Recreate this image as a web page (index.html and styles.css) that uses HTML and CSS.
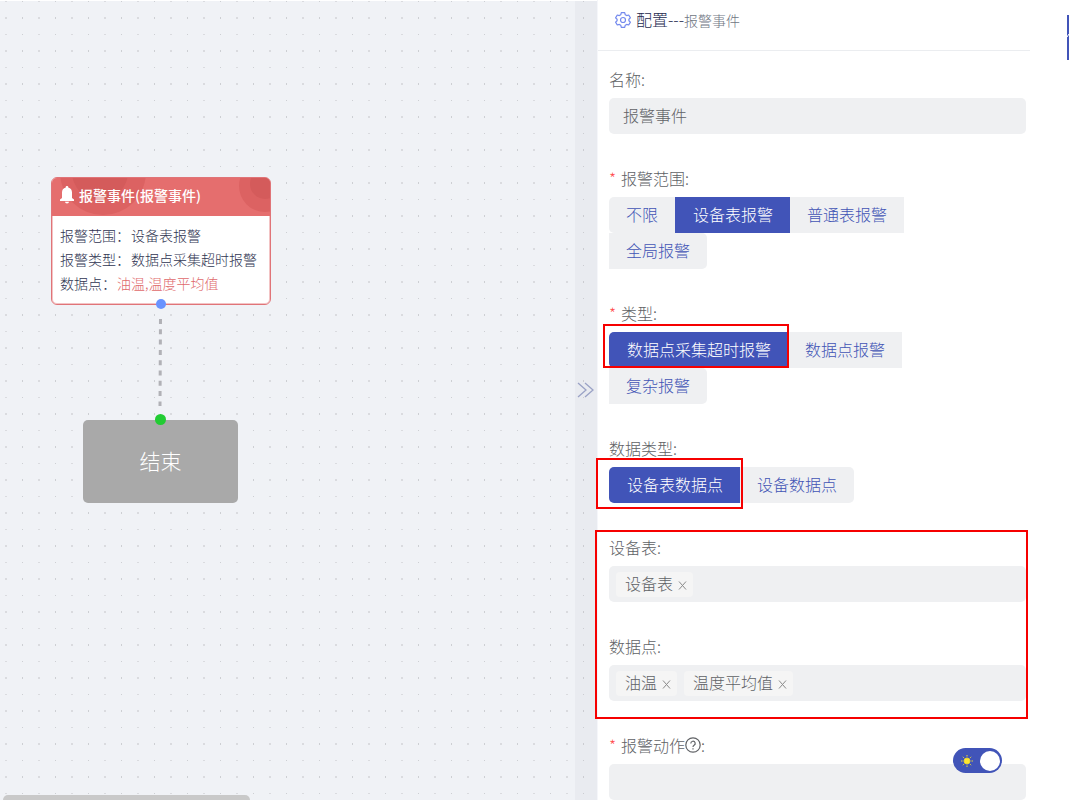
FILE: index.html
```html
<!DOCTYPE html>
<html lang="zh-CN">
<head>
<meta charset="utf-8">
<title>配置 - 报警事件</title>
<meta name="viewport" content="width=device-width, initial-scale=1">
<link rel="stylesheet" href="styles.css">
</head>
<body>
<div class="app">
  <main class="canvas">
    <svg class="grid" aria-hidden="true">
      <defs>
        <pattern id="dots" width="33" height="33" patternUnits="userSpaceOnUse">
          <path d="M5 1h2v1H5zM5 17h2v2H5z" fill="#dadbdf"/>
          <path d="M22 1h1v1h-1zM22 17h1v2h-1z" fill="#cdcfd3"/>
        </pattern>
      </defs>
      <rect width="100%" height="100%" fill="url(#dots)"/>
    </svg>

    <svg class="link" viewBox="0 0 4 90" aria-hidden="true"><path d="M2.500 0L2 88"/></svg>

    <article class="node">
      <header class="node-head">
        <svg class="node-art" viewBox="0 0 218 38" preserveAspectRatio="none" aria-hidden="true">
          <circle cx="51" cy="-6" r="43" fill="#dc6262"/>
          <circle cx="48" cy="-6" r="28" fill="#d45b5b"/>
          <circle cx="213" cy="8" r="26" fill="#dc6262"/>
          <circle cx="213" cy="6" r="15" fill="#d45b5b"/>
        </svg>
        <svg class="bell" viewBox="0 0 14 18" aria-hidden="true">
          <path d="M7 0a1.200 1.200 0 0 1 1.200 1.500C10.800 2.100 12 4 12 6.500V12l2 1.500V15H0v-1.500L2 12V6.500C2 4 3.200 2.100 5.800 1.500A1.200 1.200 0 0 1 7 0zM5 15.800h4a2 1.800 0 0 1-4 0z"/>
        </svg>
        <h2 class="node-title">报警事件(报警事件)</h2>
      </header>
      <dl class="node-body">
        <div class="row"><dt>报警范围：</dt><dd>设备表报警</dd></div>
        <div class="row"><dt>报警类型：</dt><dd>数据点采集超时报警</dd></div>
        <div class="row"><dt>数据点：</dt><dd class="points">油温,温度平均值</dd></div>
      </dl>
      <span class="port port-out"></span>
    </article>

    <div class="end-node">结束<span class="port port-in"></span></div>

    <button class="collapse" type="button" aria-label="收起">
      <svg viewBox="0 0 18 18" aria-hidden="true"><path d="M1 2l8 7-8 7M8 2l8 7-8 7"/></svg>
    </button>
    <div class="scrollbar"></div>
  </main>

  <aside class="panel">
    <header class="panel-head">
      <svg class="gear" viewBox="0 0 16 16" aria-hidden="true">
        <path d="M6.300 .7h3.400l.5 2 1.500.9 2-.6 1.700 2.900L13.900 7.300v1.400l1.500 1.400-1.700 2.900-2-.6-1.500.9-.5 2H6.300l-.5-2-1.500-.9-2 .6L.6 10.100l1.500-1.400V7.300L.6 5.900 2.300 3l2 .6 1.500-.9z"/>
        <circle cx="8" cy="8" r="2.500"/>
      </svg>
      <h1 class="panel-title">配置<span class="dash">---</span><small>报警事件</small></h1>
    </header>

    <form class="form">
      <div class="field">
        <label class="label" for="name">名称:</label>
        <input class="input" id="name" type="text" value="报警事件">
      </div>

      <div class="field" role="radiogroup" aria-labelledby="scope-label">
        <div class="label required" id="scope-label">报警范围:</div>
        <div class="segments">
          <label class="segment"><input type="radio" name="scope">不限</label>
          <label class="segment"><input type="radio" name="scope" checked>设备表报警</label>
          <label class="segment"><input type="radio" name="scope">普通表报警</label>
          <label class="segment"><input type="radio" name="scope">全局报警</label>
        </div>
      </div>

      <div class="field" role="radiogroup" aria-labelledby="type-label">
        <div class="label required" id="type-label">类型:</div>
        <div class="segments">
          <label class="segment"><input type="radio" name="type" checked>数据点采集超时报警</label>
          <label class="segment"><input type="radio" name="type">数据点报警</label>
          <label class="segment"><input type="radio" name="type">复杂报警</label>
          <span class="mark mark-type"></span>
        </div>
      </div>

      <div class="field" role="radiogroup" aria-labelledby="data-label">
        <div class="label" id="data-label">数据类型:</div>
        <div class="segments">
          <label class="segment"><input type="radio" name="data" checked>设备表数据点</label>
          <label class="segment"><input type="radio" name="data">设备数据点</label>
          <span class="mark mark-data"></span>
        </div>
      </div>

      <div class="group">
        <div class="field">
          <div class="label" id="table-label">设备表:</div>
          <div class="tags" role="group" aria-labelledby="table-label">
            <span class="tag">设备表<button class="remove" type="button" aria-label="移除设备表"><svg viewBox="0 0 9 9"><path d="M1 .5l7 8M8 .5l-7 8"/></svg></button></span>
          </div>
        </div>
        <div class="field">
          <div class="label" id="point-label">数据点:</div>
          <div class="tags" role="group" aria-labelledby="point-label">
            <span class="tag">油温<button class="remove" type="button" aria-label="移除油温"><svg viewBox="0 0 9 9"><path d="M1 .5l7 8M8 .5l-7 8"/></svg></button></span>
            <span class="tag">温度平均值<button class="remove" type="button" aria-label="移除温度平均值"><svg viewBox="0 0 9 9"><path d="M1 .5l7 8M8 .5l-7 8"/></svg></button></span>
          </div>
        </div>
        <span class="mark mark-group"></span>
      </div>

      <div class="field">
        <label class="label required" for="action">报警动作<svg class="help" viewBox="0 0 16 16" aria-hidden="true"><circle cx="8" cy="8" r="7.200"/><path d="M5.800 6.400a2.200 2.200 0 1 1 3.300 1.900C8.300 8.800 8 9.200 8 10M8 11.200v1.200"/></svg>:</label>
        <input class="input" id="action" type="text">
        <label class="switch">
          <input type="checkbox" role="switch" aria-label="主题" checked>
          <svg class="sun" viewBox="0 0 12 12" aria-hidden="true">
            <circle cx="6" cy="6" r="3"/>
            <path d="M6 0v1.500M6 10.500V12M0 6h1.500M10.500 6H12M1.800 1.800l1 1M9.200 9.200l1 1M10.200 1.800l-1 1M2.800 9.200l-1 1"/>
          </svg>
          <span class="knob"></span>
        </label>
      </div>
    </form>
    <button class="side-tab" type="button" aria-label="设置"><svg viewBox="0 0 2 45"><path d="M0 22l2-3"/></svg></button>
  </aside>
</div>
</body>
</html>
```
FILE: styles.css
```css
* { box-sizing: border-box; }

body {
  margin: 0;
  font-family: "Noto Sans CJK SC", sans-serif;
  font-size: 16px;
  font-weight: 300;
  color: #606266;
  background: #fff;
}

button, input { font: inherit; color: inherit; }
h1, h2, dl, dd { margin: 0; font-weight: inherit; }

.app {
  display: flex;
  height: 100vh;
  overflow: hidden;
}

/* Flow canvas */
.canvas {
  position: relative;
  flex: 1;
  min-width: 0;
  overflow: hidden;
  background: #f0f2f6;
  border-top: 1px solid #fff;
}

.grid {
  position: absolute;
  top: -1px;
  left: 0;
  width: 100%;
  height: 100%;
}

.link {
  position: absolute;
  left: 158px;
  top: 317px;
  width: 4px;
  height: 90px;
}
.link path {
  stroke: #b1b1b6;
  stroke-width: 3;
  stroke-dasharray: 5 5.300;
  stroke-dashoffset: -1;
}

.node {
  position: absolute;
  left: 51px;
  top: 176px;
  width: 220px;
  background: #fff;
  border: 1px solid #e07478;
  border-radius: 6px;
  box-shadow: inset 0 0 0 1px #f3c4c5;
}
.node-head {
  position: relative;
  display: flex;
  align-items: center;
  gap: 5px;
  height: 38px;
  padding: 0 0 4px 8px;
  overflow: hidden;
  background: #e56e6e;
  border-radius: 5px 5px 0 0;
  color: #fff;
}
.node-art {
  position: absolute;
  inset: 0;
  width: 100%;
  height: 100%;
}
.bell {
  position: relative;
  width: 14px;
  height: 18px;
  fill: #fff;
}
.node-title {
  position: relative;
  font-size: 14px;
  font-weight: 500;
  line-height: 22px;
}
.node-body {
  padding: 7px 0 9px 8px;
  font-size: 14px;
  line-height: 24px;
  color: #303552;
  white-space: nowrap;
}
.row { display: flex; gap: 1px; }
.points { color: #e0696b; }

.port {
  position: absolute;
  width: 10px;
  height: 10px;
  border-radius: 50%;
}
.port-out { left: 104px; bottom: -5px; background: #6a93ff; }
.port-in { left: 72px; top: -6px; width: 11px; height: 11px; background: #22cc33; }

.end-node {
  position: absolute;
  left: 83px;
  top: 419px;
  width: 155px;
  height: 83px;
  border-radius: 5px;
  background: #a9a9a9;
  color: #fff;
  font-size: 21px;
  line-height: 80px;
  text-align: center;
}

.collapse {
  position: absolute;
  top: 0;
  right: 0;
  width: 22px;
  height: 100%;
  padding: 0;
  border: 0;
  background: rgba(190, 190, 195, 0.12);
}
.collapse svg {
  display: block;
  width: 18px;
  height: 18px;
  margin: -20px auto 0;
  fill: none;
  stroke: #9aa2c6;
  stroke-width: 1.300;
}

.scrollbar {
  position: absolute;
  left: 3px;
  bottom: 0;
  width: 247px;
  height: 5px;
  border-radius: 5px 5px 0 0;
  background: #c9c9c9;
}

/* Settings panel */
.panel {
  position: relative;
  flex: 0 0 472px;
  border-left: 1px solid #f5f6fa;
  background: #fff;
}
.panel-head {
  display: flex;
  align-items: center;
  gap: 5px;
  height: 51px;
  margin-right: 39px;
  padding: 0 0 11px 17px;
  border-bottom: 1px solid #ebedf0;
}
.gear {
  width: 16px;
  height: 16px;
  fill: none;
  stroke: #7389ee;
  stroke-width: 1.200;
  stroke-linejoin: round;
}
.panel-title {
  font-size: 16px;
  line-height: 22px;
  color: #252b50;
}
.panel-title small { font-size: 14px; color: #707683; }

.form { padding: 11px 43px 0 11px; }
.field { position: relative; margin-bottom: 27px; }
.label {
  display: flex;
  align-items: center;
  height: 36px;
  padding-bottom: 2px;
}
.required::before {
  content: "*";
  margin-right: 5px;
  color: #ff4d4f;
}
.help {
  width: 16px;
  height: 16px;
  fill: none;
  stroke: #606266;
  stroke-width: 1.200;
}

.input, .tags {
  display: flex;
  width: 100%;
  height: 36px;
  border: 0;
  border-radius: 5px;
  background: #eff0f2;
}
.input { padding: 0 14px 2px; outline: 0; }
.tags { align-items: center; gap: 7px; padding: 0 7px; }
.tag {
  display: flex;
  align-items: center;
  gap: 5px;
  height: 25px;
  padding: 0 6px 2px 9px;
  border-radius: 4px;
  background: #f5f5f5;
}
.remove {
  display: flex;
  padding: 5px 0 0;
  border: 0;
  background: none;
}
.remove svg {
  width: 9px;
  height: 9px;
  fill: none;
  stroke: #8b8b8b;
}

.segments {
  position: relative;
  display: flex;
  flex-wrap: wrap;
  max-width: 360px;
}
.segment {
  height: 36px;
  padding: 0 17px;
  line-height: 34px;
  background: #eff0f2;
  color: #4254b5;
}
.segment input {
  position: absolute;
  opacity: 0;
  pointer-events: none;
}
.segment:first-child { border-radius: 5px 0 0 5px; }
.segment:nth-last-child(1 of .segment) { border-radius: 0 5px 5px 0; }
.segment:has(:checked) {
  padding: 0 17px 0 18px;
  background: #4154b8;
  color: #fff;
}

.mark {
  position: absolute;
  border: 2px solid #f60000;
  pointer-events: none;
}
.mark-type { left: -6px; top: -8px; width: 186px; height: 44px; }
.mark-data { left: -13px; top: -9px; width: 147px; height: 51px; }
.group { position: relative; }
.mark-group { inset: 0 -2px -18px -14px; }

.switch {
  position: absolute;
  top: 20px;
  right: 24px;
  display: flex;
  align-items: center;
  justify-content: space-between;
  width: 49px;
  height: 25px;
  padding: 0 2px 0 8px;
  border-radius: 13px;
  background: #4154b8;
}
.switch input { position: absolute; opacity: 0; }
.sun {
  width: 12px;
  height: 12px;
  fill: #ffe62e;
  stroke: #e8d437;
  stroke-width: 1;
}
.knob {
  width: 20px;
  height: 20px;
  border-radius: 50%;
  background: #fff;
}

.side-tab {
  position: absolute;
  top: 15px;
  right: 0;
  width: 2px;
  height: 45px;
  padding: 0;
  border: 0;
  background: #4154b8;
}
.side-tab svg { display: block; stroke: #fff; }
```
